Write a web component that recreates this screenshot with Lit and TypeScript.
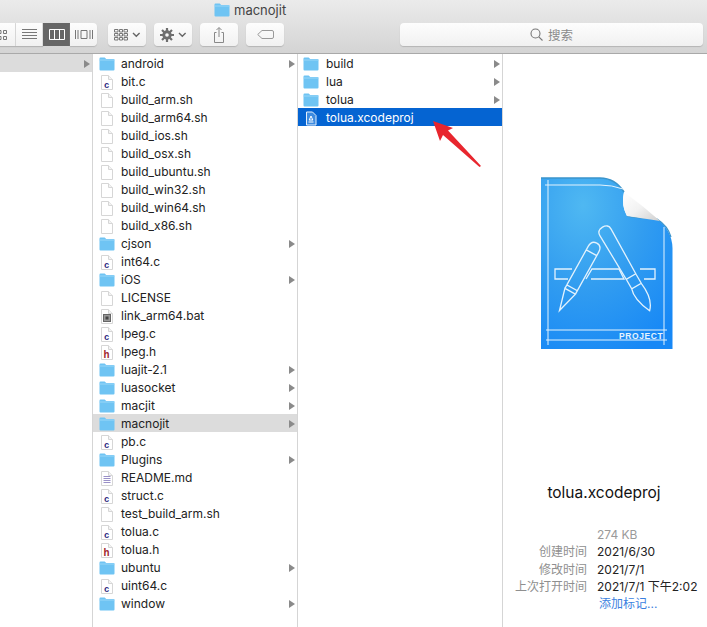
import { html, css, svg, LitElement } from 'lit';
import { customElement } from 'lit/decorators.js';

type Kind = 'folder' | 'c' | 'h' | 'blank' | 'bat' | 'md' | 'proj';
type Row = { name: string; kind: Kind; selected?: 'gray' | 'blue' };

const second: Row[] = [
  { name: 'android', kind: 'folder' },
  { name: 'bit.c', kind: 'c' },
  { name: 'build_arm.sh', kind: 'blank' },
  { name: 'build_arm64.sh', kind: 'blank' },
  { name: 'build_ios.sh', kind: 'blank' },
  { name: 'build_osx.sh', kind: 'blank' },
  { name: 'build_ubuntu.sh', kind: 'blank' },
  { name: 'build_win32.sh', kind: 'blank' },
  { name: 'build_win64.sh', kind: 'blank' },
  { name: 'build_x86.sh', kind: 'blank' },
  { name: 'cjson', kind: 'folder' },
  { name: 'int64.c', kind: 'c' },
  { name: 'iOS', kind: 'folder' },
  { name: 'LICENSE', kind: 'blank' },
  { name: 'link_arm64.bat', kind: 'bat' },
  { name: 'lpeg.c', kind: 'c' },
  { name: 'lpeg.h', kind: 'h' },
  { name: 'luajit-2.1', kind: 'folder' },
  { name: 'luasocket', kind: 'folder' },
  { name: 'macjit', kind: 'folder' },
  { name: 'macnojit', kind: 'folder', selected: 'gray' },
  { name: 'pb.c', kind: 'c' },
  { name: 'Plugins', kind: 'folder' },
  { name: 'README.md', kind: 'md' },
  { name: 'struct.c', kind: 'c' },
  { name: 'test_build_arm.sh', kind: 'blank' },
  { name: 'tolua.c', kind: 'c' },
  { name: 'tolua.h', kind: 'h' },
  { name: 'ubuntu', kind: 'folder' },
  { name: 'uint64.c', kind: 'c' },
  { name: 'window', kind: 'folder' },
];

const third: Row[] = [
  { name: 'build', kind: 'folder' },
  { name: 'lua', kind: 'folder' },
  { name: 'tolua', kind: 'folder' },
  { name: 'tolua.xcodeproj', kind: 'proj', selected: 'blue' },
];

const meta = [
  { label: '创建时间', value: '2021/6/30' },
  { label: '修改时间', value: '2021/7/1' },
  { label: '上次打开时间', value: '2021/7/1 下午2:02' },
];

const folder = () => html`<svg width="16" height="14" viewBox="0 0 16 14">
  <path d="M1.500 0.500h4.200l1.500 1.600h7.300q1 0 1 1v9.400q0 1-1 1H1.500q-1 0-1-1V1.500q0-1 1-1z" fill="#6fc4f3" />
  <path d="M.5 3h15" stroke="#9bd7f8" stroke-width="1" />
</svg>`;

const page = (inner: unknown = '') => html`<svg width="12" height="15" viewBox="0 0 12 15">
  <path d="M.5.500h7l4 4v10H.5z" fill="#fff" stroke="#d6d6d6" />
  <path d="M7.500.500v4h4" fill="#f3f3f3" stroke="#d6d6d6" />
  ${inner}
</svg>`;

const fileIcon = (kind: Kind) => {
  switch (kind) {
    case 'folder':
      return folder();
    case 'c':
      return page(svg`<text x="3" y="12.500" font-size="9" font-weight="700" font-family="Liberation Mono" fill="#2f2a80">c</text>`);
    case 'h':
      return page(svg`<text x="2.600" y="12.500" font-size="10" font-weight="700" font-family="Liberation Mono" fill="#a01c2c">h</text>`);
    case 'bat':
      return page(svg`<rect x="2.500" y="5.500" width="7" height="7" fill="#999" stroke="#666" /><rect x="4.500" y="7.500" width="3" height="3" fill="#444" />`);
    case 'md':
      return page(svg`<path d="M2.500 5.500h7M2.500 7.500h7M2.500 9.500h7M2.500 11.500h7" stroke="#9a90c8" stroke-width="1" />`);
    case 'proj':
      return html`<svg width="12" height="15" viewBox="0 0 12 15">
        <path d="M1.500 1h6l3.500 3.500V14H1.500z" fill="#3d8be0" stroke="#e6effb" />
        <path d="M3.500 11h5M6 5l-1.800 4M6 5l1.800 4M4 9h4" stroke="#fff" fill="none" />
      </svg>`;
    default:
      return page();
  }
};

const chevron = html`<svg width="9" height="6" viewBox="0 0 9 6"><path d="M1 1l3.300 3.300L7.600 1" fill="none" stroke="#666" stroke-width="1.400" /></svg>`;

const bigIcon = html`<svg class="big" width="170" height="195" viewBox="0 0 170 195">
  <defs>
    <radialGradient id="doc" cx="0.32" cy="0.16" r="0.95">
      <stop offset="0" stop-color="#4fb8f2" />
      <stop offset="0.5" stop-color="#329df0" />
      <stop offset="1" stop-color="#1788f6" />
    </radialGradient>
    <linearGradient id="curl" x1="0" y1="0" x2="1" y2="1">
      <stop offset="0" stop-color="#ffffff" />
      <stop offset="0.5" stop-color="#f2f2f2" />
      <stop offset="1" stop-color="#cfcfcf" />
    </linearGradient>
  </defs>
  <path d="M21 13H80Q95 13 104 27Q101 40 107 51Q115 53 137 54Q152 65 152.500 83V184H21z" fill="url(#doc)" />
  <path d="M21 13H80Q95 13 104 27" fill="none" stroke="#3a94cb" stroke-width="1.500" />
  <path d="M107 51Q115 53 137 54Q148 61 151 72" fill="none" stroke="#3a94cb" stroke-width="1.200" />
  <path d="M104 27Q122 40 140 56Q120 53 107 51Q101 40 104 27z" fill="url(#curl)" />
  <g fill="none" stroke="#e2f2fd" stroke-width="1">
    <path d="M28 15V180M25 20H80Q92 20 103 24M144 62V180M26 165H147M26 175H147" />
    <path d="M52 104H35V114H48M66 114L72 104H99L104 114H71M120 104H135V114H124" stroke-width="1.300" />
    <g transform="translate(39.500 145.500) rotate(29)" stroke-width="1.300">
      <path d="M0 0L-6 -22H6zM-6 -22V-26H6V-22M-6 -26V-70Q-6 -77 0 -77Q6 -77 6 -70V-26M-6 -66H6" />
    </g>
    <g transform="translate(83 63) rotate(-30)" stroke-width="1.300">
      <path d="M-6.500 5Q-6.500 -1 0 -1Q6.500 -1 6.500 5L5.500 56H-5.500zM-5.500 56L-5.500 67H5.500V56M-5.500 67Q-9 77 -1 95Q8 86 5.500 67" />
    </g>
  </g>
  <text x="99" y="174" font-size="8.500" font-weight="700" letter-spacing="0.600" font-family="Liberation Sans, sans-serif" fill="#e6f4fe">PROJECT</text>
</svg>`;

@customElement('app-root')
export class AppRoot extends LitElement {
  static styles = css`
    :host {
      display: block;
      position: relative;
      width: 707px;
      height: 627px;
      overflow: hidden;
      background: #fff;
      color: #222;
      font-family: Inter, "Noto Sans CJK SC", sans-serif;
      font-size: 12px;
    }
    .toolbar {
      height: 53px;
      background: linear-gradient(#ebebeb, #d4d4d4);
      border-bottom: 1px solid #a9a9a9;
    }
    .title {
      height: 23px;
      padding-left: 214px;
      display: flex;
      align-items: flex-start;
      gap: 4px;
      padding-top: 3px;
      box-sizing: border-box;
      font-size: 13px;
      line-height: 14px;
      color: #444;
    }
    .controls {
      display: flex;
      margin-left: -12px;
      height: 23px;
    }
    .btn {
      height: 23px;
      box-sizing: border-box;
      background: linear-gradient(#fdfdfd, #f1f1f1);
      border-radius: 4px;
      box-shadow: 0 1px 1px #b5b5b5;
      display: flex;
      align-items: center;
      justify-content: center;
      gap: 4px;
    }
    .seg {
      display: flex;
      margin-right: 11px;
    }
    .seg .btn {
      width: 27px;
      border-radius: 0;
      border-right: 1px solid #dcdcdc;
    }
    .seg .btn:first-child {
      width: 28px;
      justify-content: flex-end;
      padding-right: 8px;
    }
    .seg .btn:last-child {
      border-radius: 0 4px 4px 0;
      border-right: 0;
    }
    .seg .btn.on {
      background: #666;
      box-shadow: none;
      border-right: 0;
    }
    .tool {
      width: 38px;
      margin-right: 8px;
    }
    .search {
      width: 303px;
      margin-left: 108px;
      color: #8a8a8a;
      font-size: 12.500px;
      gap: 5px;
    }
    .browser {
      display: flex;
      height: 573px;
    }
    .col {
      box-sizing: border-box;
      width: 205px;
      border-right: 1px solid #d5d5d5;
    }
    .col.first {
      width: 93px;
    }
    .row {
      height: 18px;
      box-sizing: border-box;
      display: flex;
      align-items: center;
      padding: 2px 2px 0 6px;
      white-space: nowrap;
      line-height: 16px;
    }
    .col.third .row {
      padding-left: 5px;
    }
    .row.gray {
      background: #dcdcdc;
    }
    .row.blue {
      background: #0564d2;
      color: #fff;
    }
    .ico {
      width: 16px;
      height: 16px;
      display: flex;
      align-items: center;
      justify-content: center;
      flex: none;
    }
    .name {
      margin-left: 6px;
      flex: 1;
    }
    .col.third .name {
      margin-left: 7px;
    }
    .tri {
      width: 0;
      height: 0;
      border-left: 6px solid #8a8a8a;
      border-top: 4px solid transparent;
      border-bottom: 4px solid transparent;
    }
    .preview {
      flex: 1;
      display: flex;
      flex-direction: column;
    }
    .big {
      display: block;
      margin: 111px 0 0 17px;
    }
    .file {
      margin-top: 123px;
      height: 20px;
      line-height: 20px;
      text-align: center;
      font-size: 15.500px;
      color: #111;
      padding-right: 2px;
    }
    .meta {
      margin-top: 23px;
      display: grid;
      grid-template-columns: 84px 1fr;
      column-gap: 10px;
      grid-auto-rows: 17.250px;
      line-height: 17.250px;
      white-space: nowrap;
    }
    .meta .k {
      text-align: right;
      color: #8f8f8f;
    }
    .meta .size {
      color: #9a9a9a;
    }
    .meta a {
      color: #3b7fe0;
      margin-left: 2px;
    }
    .arrow {
      position: absolute;
      left: 0;
      top: 0;
      pointer-events: none;
    }
  `;

  private _row(r: Row) {
    return html`<div class="row ${r.selected ?? ''}">
      <span class="ico">${fileIcon(r.kind)}</span>
      <span class="name">${r.name}</span>
      ${r.kind === 'folder' ? html`<span class="tri"></span>` : ''}
    </div>`;
  }

  private _toolbar() {
    return html`<div class="toolbar">
      <div class="title">${folder()}<span>macnojit</span></div>
      <div class="controls">
        <div class="seg">
          <div class="btn">
            <svg width="8" height="10" viewBox="0 0 8 10" fill="none" stroke="#777">
              <path d="M-1 .5h3v3h-3zM-1 6.500h3v3h-3zM4.500 .5h3v3h-3zM4.500 6.500h3v3h-3z" />
            </svg>
          </div>
          <div class="btn">
            <svg width="15" height="11" viewBox="0 0 15 11" stroke="#777"><path d="M0 .5h15M0 3.500h15M0 6.500h15M0 9.500h15" /></svg>
          </div>
          <div class="btn on">
            <svg width="16" height="11" viewBox="0 0 16 11" fill="none" stroke="#fff"><path d="M.5.500h15v10H.5zM5.500.500v10M10.500.500v10" /></svg>
          </div>
          <div class="btn">
            <svg width="18" height="11" viewBox="0 0 18 11" fill="none" stroke="#777"><path d="M.5 1v9M3 1v9M6 1.500h6v8H6zM15 1v9M17.500 1v9" /></svg>
          </div>
        </div>
        <div class="btn tool">
          <svg width="14" height="12" viewBox="0 0 14 12" fill="none" stroke="#777"><path d="M.5.500h3.500v2.500H.5zM5.500.500h3v2.500h-3zM10 .500h3.500v2.500H10zM.5 4.500h3.500V7H.5zM5.500 4.500h3V7h-3zM10 4.500h3.500V7H10zM.5 8.500h3.500V11H.5zM5.500 8.500h3V11h-3zM10 8.500h3.500V11H10z" /></svg>
          ${chevron}
        </div>
        <div class="btn tool">
          <svg width="14" height="14" viewBox="0 0 14 14">
            <circle cx="7" cy="7" r="3.200" fill="none" stroke="#6e6e6e" stroke-width="3" />
            <path d="M7 0v14M0 7h14M2 2l10 10M12 2L2 12" stroke="#6e6e6e" stroke-width="2.200" />
            <circle cx="7" cy="7" r="1.800" fill="#f6f6f6" />
          </svg>
          ${chevron}
        </div>
        <div class="btn tool">
          <svg width="12" height="16" viewBox="0 0 12 16" fill="none" stroke="#888">
            <path d="M3.500 5.500H1.500v10h9v-10H8.500M6 10V.8M3.500 3L6 .5 8.500 3" />
          </svg>
        </div>
        <div class="btn tool">
          <svg width="17" height="9" viewBox="0 0 17 9" fill="none" stroke="#999">
            <path d="M5 .5h10q1.500 0 1.500 1.500v5q0 1.500-1.500 1.500H5L.7 4.500z" />
          </svg>
        </div>
        <div class="btn search">
          <svg width="13" height="13" viewBox="0 0 13 13" fill="none" stroke="#777" stroke-width="1.100">
            <circle cx="5.500" cy="5.500" r="4.500" />
            <path d="M8.800 8.800L12.500 12.500" />
          </svg>
          <span>搜索</span>
        </div>
      </div>
    </div>`;
  }

  render() {
    return html`
      ${this._toolbar()}
      <div class="browser">
        <div class="col first">
          <div class="row gray" style="justify-content: flex-end"><span class="tri"></span></div>
        </div>
        <div class="col">${second.map((r) => this._row(r))}</div>
        <div class="col third">${third.map((r) => this._row(r))}</div>
        <div class="preview">
          ${bigIcon}
          <div class="file">tolua.xcodeproj</div>
          <div class="meta">
            <span></span><span class="size">274 KB</span>
            ${meta.map((m) => html`<span class="k">${m.label}</span><span>${m.value}</span>`)}
            <span></span><a>添加标记...</a>
          </div>
        </div>
      </div>
      <svg class="arrow" width="707" height="627" viewBox="0 0 707 627">
        <path d="M433 121L453 128L448 130.500L481 166L479.500 167L443 135L440 141z" fill="#e8262e" />
      </svg>
    `;
  }
}
